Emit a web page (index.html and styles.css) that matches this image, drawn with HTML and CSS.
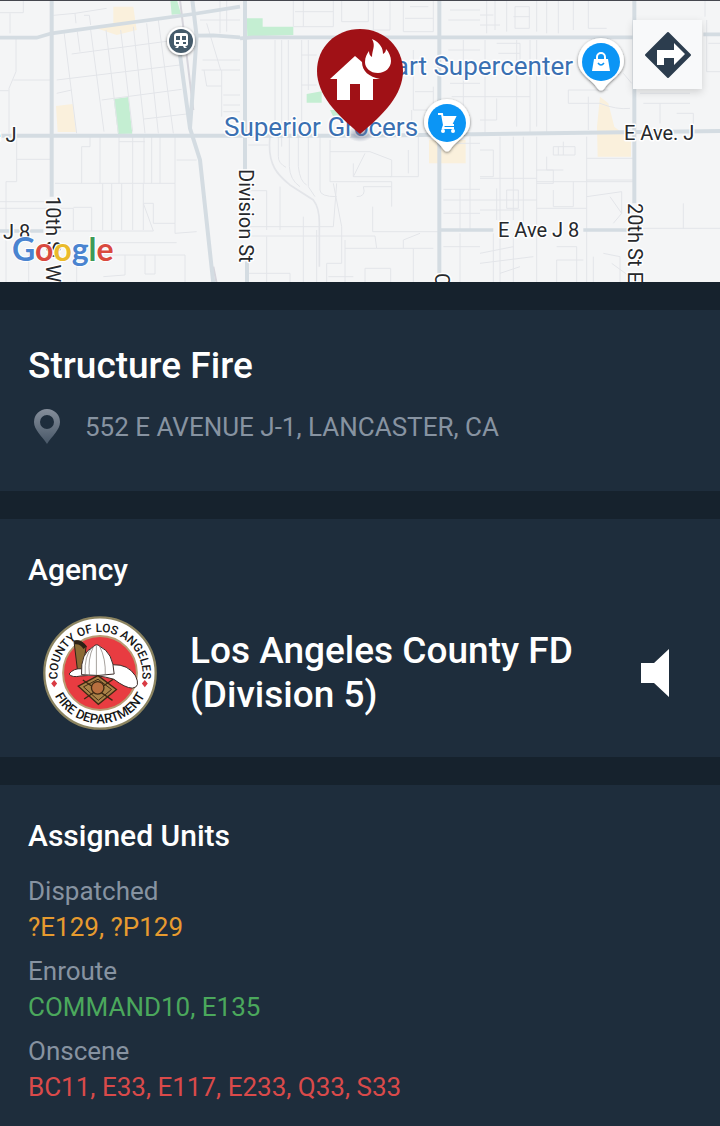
FILE: index.html
```html
<!DOCTYPE html>
<html lang="en">
<head>
<meta charset="utf-8">
<meta name="viewport" content="width=device-width, initial-scale=1">
<title>Structure Fire</title>
<link rel="stylesheet" href="styles.css">
</head>
<body>
<main class="incident">
  <section class="map" aria-label="Incident map">
    <svg class="map-canvas" viewBox="0 0 720 282" preserveAspectRatio="xMidYMid slice" role="img" aria-label="Map of Lancaster">
      <defs>
        <path id="poi" d="M0-24A23 23 0 0 0-23-1C-23 12-9 17-3 27Q0 30 3 27C9 17 23 12 23-1A23 23 0 0 0 0-24Z"/>
        <filter id="shadow" x="-30%" y="-30%" width="160%" height="160%"><feDropShadow dx="0" dy="1" stdDeviation="1.5" flood-color="#000" flood-opacity=".55"/></filter>
        <radialGradient id="tip"><stop offset="0" stop-color="#6b7590" stop-opacity=".7"/><stop offset="1" stop-color="#6b7590" stop-opacity="0"/></radialGradient>
      </defs>
      <g transform="scale(.33333)">
        <g class="zone">
          <path d="M340 20h60l10 70-60 15-60-20 50-15z M168 318l50-6 10 84h-55z M1287 420h110v70h-110z M1800 290l25 20 18 70 50 40v50h-100l-2-90z"/>
        </g>
        <g class="park">
          <path d="M341 297l44-6 12 110-43 1z M511 0h20l12 42-28 2z M740 55h48v25h92v25l-138 4z M920 282l45-8v34h-45z M990 330h60v20h-50z"/>
        </g>
        <g class="street">
          <path d="M0 38H70V0M30 40V100M48 110V215L27 265V400M40 240H150M0 272H26M50 410V545H18V690M50 478H150M0 605H150M0 625H150M18 690V850M86 760V850"/>
          <path d="M160 46L225 40 228 70M225 40L320 25M252 46H268L272 75M215 162L530 120M170 240L540 195M170 280L215 270M305 300L545 268M432 357L560 342"/>
          <path d="M192 95L230 400M232 95L240 155M272 90L312 395M318 90L355 400M362 90L398 395M400 80L435 400M440 70L475 400M475 60L520 400"/>
          <path d="M165 550H525V410M245 550V440H270V410M300 410V550M357 410V550M398 410V550M432 410V550M455 410V550M480 410V550M357 425H435M530 480H590"/>
          <path d="M170 693H460L430 610M220 622H275V693M308 550V690M335 550V690M365 550V690M398 550V690M430 550V690M432 610H460V670H525V550M525 670V700L590 695M170 625H220V690M300 728H530M310 765H555V850M375 765V825L310 830M435 765V822H465V765M230 770V850"/>
          <path d="M600 60H720M608 180H720M605 210H720M612 210L620 258H665V210M665 258V350M620 70L662 210M660 0V100M680 0V95M670 285H720M670 315H720M670 335H720"/>
          <path d="M880 0V80H1000V0M910 0V80M885 35H1000M1025 0V65H1105V0M1120 0V90H1170V0M1210 0V95H1300V0M1215 55H1300M1230 20H1285M1350 30H1440M1345 60H1440"/>
          <path d="M825 120V400M845 120V440M865 120V400M905 120V400M925 120V270M905 165H950M905 255H950M1240 150V330H1300V260M1245 275H1300M1235 330V400M1345 150H1440M1350 250H1440M1355 290H1440M1390 120V400"/>
          <path class="wide" d="M810 410C800 500 840 530 870 555L940 600Q960 625 958 680V800"/>
          <path d="M745 435H805M835 410V470Q835 490 858 502M868 410V500Q870 540 900 560M895 410V500Q900 545 920 555M925 410V560L945 590M960 410V570Q960 590 1010 590M990 420V545H1070M990 455H1110L1175 480V530H1060L1095 460M1060 530V490M1070 545H1175V620M1070 590Q1100 590 1090 560H1175M1170 530H1255V410M1225 450V520"/>
          <path d="M745 572H800V690M720 680H1000L1010 550M745 708H1125L1130 745H1300M1118 620V695H1320M800 710V850M840 560V690M910 650V850M950 690V850M1035 720V850M1035 745H1130M1210 745V720L1260 700M1240 745V850M985 830H1060M1095 850V805H1172V850M1000 550L1025 680V790H980V850M745 820H870V850"/>
          <path d="M1330 430H1440M1330 568H1440M1380 568V690M1330 600H1440M1330 640H1440M1380 700V850M1330 740H1440M1410 410V690"/>
          <path d="M1460 0V100M1485 0V90M1520 0V95M1545 20H1588V85H1545ZM1610 0V95M1640 0V100M1675 0V100M1720 0V90M1765 0V85H1820M1440 45H1480M1440 75H1500M1540 50H1590"/>
          <path d="M1455 120V400M1490 130H1560V200M1495 160H1560M1550 120V380M1590 120V400M1610 120V380M1640 220V400M1440 290H1590M1490 295V360H1440M1705 270H1825M1705 270V310H1800Q1850 330 1890 325M1765 290V390M1870 220L1895 250"/>
          <path d="M1440 450H1480V530H1440M1500 410V850M1540 410V660M1570 410V690M1610 410V850M1440 535H1610M1610 510H1660V550H1610M1640 470V510H1690M1660 440H1725V465H1660ZM1690 425V465M1675 440V465M1760 410V850M1760 475H1900M1760 540H1900M1610 545H1900M1660 570V620H1720V545M1440 600H1610M1490 565V660M1520 570V625H1555V570ZM1610 625H1760M1760 590L1865 575V640L1840 670M1830 590L1865 640M1440 630H1560"/>
          <path d="M1480 700V850M1540 700V850M1440 760L1540 740M1440 790L1600 770M1500 820L1560 800M1670 850V780H1750M1670 740H1730V850M1780 770V850M1810 760L1860 770V850M1835 790L1890 830M1920 280H2070M1980 310V370M1930 310H2070M2030 340H2080V390M2120 60V215H2160M2115 0V50M2125 130H2160M1910 685H2160M2050 610V685"/>
        </g>
        <g class="rail"><path d="M540 0L580 330M640 800L650 850"/></g>
        <g class="road">
          <path d="M0 113H110L155 100 580 42 720 20M590 107L640 106 720 112M720 115L760 112H1900M2110 103H2160" stroke-width="11"/>
          <path d="M155 0V590M0 407H1100L2160 393" stroke-width="12"/>
          <path d="M540 165L570 385 600 480 640 850M577 0L590 110 570 385M735 0V520M741 780V850M1318 0V820M1903 0V610" stroke-width="12"/>
          <path d="M0 693H130M1320 690H1480M1750 690H1900" stroke-width="10"/>
        </g>
      </g>
      <g class="road-label">
        <text x="-10" y="142">e J</text>
        <text x="3" y="239">J 8</text>
        <text x="624" y="140">E Ave. J</text>
        <text x="498" y="237">E Ave J 8</text>
        <text transform="translate(46 196) rotate(90)">10th St W</text>
        <text transform="translate(239 169) rotate(90)">Division St</text>
        <text transform="translate(628 203) rotate(90)">20th St E</text>
        <text transform="translate(435 273) rotate(90)">C</text>
      </g>
      <g class="poi-label">
        <text x="224" y="136">Superior Grocers</text>
        <text x="573" y="75" text-anchor="end">Walmart Supercenter</text>
      </g>
      <g transform="translate(181 41)">
        <circle r="14" fill="#fff" filter="url(#shadow)"/><circle r="12" fill="#455b6b"/>
        <path d="M-4-8H4Q7-8 7-5V3Q7 5 4 5L6 7H3L2 5H-2L-3 7H-6L-4 5Q-7 5-7 3V-5Q-7-8-4-8Z" fill="#fff"/>
        <path d="M-5-5h4v4h-4zM1-5h4v4H1zM-5 1h3v2h-3zM2 1h3v2H2z" fill="#455b6b"/>
      </g>
      <g transform="translate(447 123)">
        <use href="#poi" fill="#fff" filter="url(#shadow)"/><circle r="19" fill="#0b95f5"/>
        <path d="M-9-9H-5L-3 2H7M-4-6H8L5 0H-3M-3 2L-4 5H7" fill="none" stroke="#fff" stroke-width="2"/>
        <path d="M-4-6H8L5 1H-3z" fill="#fff"/><circle cx="-4" cy="8" r="2" fill="#fff"/><circle cx="6" cy="8" r="2" fill="#fff"/>
      </g>
      <g transform="translate(601 62)">
        <use href="#poi" fill="#fff" filter="url(#shadow)"/><circle r="19" fill="#0b95f5"/>
        <path d="M-7-3H7L9 9H-9z" fill="#fff"/><path d="M-4-2V-5A4 4 0 0 1 4-5V-2" fill="none" stroke="#fff" stroke-width="2"/><path d="M-3 1Q0 5 3 1" fill="none" stroke="#0b95f5" stroke-width="1.5"/>
      </g>
      <ellipse cx="360" cy="134" rx="13" ry="8" fill="url(#tip)"/>
      <path d="M360 29C336 29 317 47 317 71C317 95 337 115 360 134C383 115 403 95 403 71C403 47 384 29 360 29Z" fill="#a01116"/>
      <path d="M330 79L355 56 362 62C362 71 369 77 380 79H373V100H360V84H350V100H337V79Z" fill="#fff"/>
      <path d="M372 39C381 43 383 49 383 54C385 53 386 51 386 49C389 52 391 57 391 61C391 68 385 73 378 73C370 73 365 68 365 62C365 57 367 54 369 51C369 54 370 56 372 57C372 50 376 46 372 39Z" fill="#fff"/>
      <text class="brand" x="12" y="261"><tspan class="blue">G</tspan><tspan class="red">o</tspan><tspan class="yellow">o</tspan><tspan class="blue">g</tspan><tspan class="green">l</tspan><tspan class="red">e</tspan></text>
      <path d="M0 0H720" stroke="#45474f" stroke-width="2"/>
    </svg>
    <button class="directions" type="button" aria-label="Directions">
      <svg viewBox="0 0 48 48" aria-hidden="true"><path d="M24 2L46 24 24 46 2 24Z" fill="#2c3d4e" stroke="#2c3d4e" stroke-width="2" stroke-linejoin="round"/><path d="M13 34V19H30V12L41 23 30 34V27H20V34Z" fill="#fff"/></svg>
    </button>
  </section>

  <section class="card summary">
    <h1 class="title">Structure Fire</h1>
    <p class="address">
      <svg class="pin" viewBox="0 0 28 36" aria-hidden="true"><defs><linearGradient id="steel" x1="0" y1="0" x2="0" y2="1"><stop offset="0" stop-color="#858e9b"/><stop offset="1" stop-color="#485767"/></linearGradient></defs><path fill="url(#steel)" fill-rule="evenodd" d="M14 0A13 13 0 0 0 1 13C1 21 9 27 14 35C19 27 27 21 27 13A13 13 0 0 0 14 0ZM14 6A7 7 0 1 1 14 20A7 7 0 1 1 14 6Z"/></svg>
      <span>552 E AVENUE J-1, LANCASTER, CA</span>
    </p>
  </section>

  <section class="card agency">
    <h2 class="heading">Agency</h2>
    <div class="agency-row">
      <svg class="seal" viewBox="37 30 346 346" role="img" aria-label="County of Los Angeles Fire Department seal">
        <defs><path id="arc-top" d="M83 230A129 129 0 1 1 337 230"/><path id="arc-bottom" d="M57 203A153 153 0 0 0 363 203"/></defs>
        <circle cx="210" cy="203" r="169" fill="#fff" stroke="#8c8460" stroke-width="7"/>
        <circle cx="210" cy="203" r="112" fill="#e83c41" stroke="#b99a72" stroke-width="6"/>
        <g class="seal-text">
          <text class="seal-top"><textPath href="#arc-top" startOffset="50%">COUNTY OF LOS ANGELES</textPath></text>
          <text class="seal-bottom"><textPath href="#arc-bottom" startOffset="50%">FIRE DEPARTMENT</textPath></text>
        </g>
        <path d="M71 224l9 11-9 11-9-11zM346 224l9 11-9 11-9-11z" fill="#d93a43"/>
        <path d="M131 106Q152 100 168 122L156 207 143 206Z" fill="#8b6b35" stroke="#2c2116" stroke-width="3"/>
        <path d="M131 106Q152 98 170 122L160 130Q150 114 134 116Z" fill="#2c2116"/>
        <path d="M116 206Q130 188 155 190L250 178Q295 176 318 212Q334 246 308 249Q286 248 252 222Q200 206 152 212Q124 218 116 206Z" fill="#fff" stroke="#3a2a26" stroke-width="3"/>
        <path d="M154 208Q150 142 190 123Q200 112 209 122Q250 140 253 206Q205 214 154 208Z" fill="#fff" stroke="#3a2a26" stroke-width="3"/>
        <path d="M190 123Q172 160 178 210M199 119V210M209 122Q228 160 226 209M186 125Q162 150 165 207" fill="none" stroke="#77706a" stroke-width="2"/>
        <path d="M204 211L260 253 205 298 144 243Z" fill="#a98247" stroke="#3e2913" stroke-width="4"/>
        <path d="M158 224L248 286M250 222L162 282" stroke="#3e2913" stroke-width="4"/>
        <path d="M204 222L245 253 205 286 160 245Z" fill="none" stroke="#3e2913" stroke-width="3"/>
        <circle cx="203" cy="248" r="19" fill="#b96f3f" stroke="#3e2913" stroke-width="4"/>
      </svg>
      <p class="agency-name">Los Angeles County FD (Division 5)</p>
      <button class="speaker" type="button" aria-label="Listen">
        <svg viewBox="0 0 28 48" aria-hidden="true"><path d="M0 14H13L28 0V48L13 34H0Z" fill="#fff"/></svg>
      </button>
    </div>
  </section>

  <section class="card units">
    <h2 class="heading">Assigned Units</h2>
    <dl class="unit-list">
      <div><dt>Dispatched</dt><dd class="dispatched">?E129, ?P129</dd></div>
      <div><dt>Enroute</dt><dd class="enroute">COMMAND10, E135</dd></div>
      <div><dt>Onscene</dt><dd class="onscene">BC11, E33, E117, E233, Q33, S33</dd></div>
    </dl>
  </section>
</main>
</body>
</html>
```

FILE: styles.css
```css
* { box-sizing: border-box; }
body {
  margin: 0;
  background: #16222d;
  color: #fff;
  font-family: Roboto, "Liberation Sans", sans-serif;
}
h1, h2, p, dl, dd { margin: 0; }
button { border: 0; padding: 0; cursor: pointer; }

.incident {
  display: flex;
  flex-direction: column;
  gap: 28px;
  min-height: 100vh;
}

.map { position: relative; background: #f4f5f6; }
.map-canvas { display: block; width: 100%; height: 282px; }
.street { fill: none; stroke: #e3e5e9; stroke-width: 3; }
.street .wide { stroke-width: 5; }
.rail { fill: none; stroke: #d6d5dc; stroke-width: 6; }
.road { fill: none; stroke: #d4dce2; }
.zone { fill: #faf0dc; }
.park { fill: #c4eed2; }
.road-label {
  font-size: 20px;
  fill: #26282b;
  stroke: #fff;
  stroke-width: 3px;
  stroke-linejoin: round;
  paint-order: stroke;
}
.poi-label {
  font-size: 26px;
  fill: #3a70b2;
  stroke: #fff;
  stroke-width: 3px;
  stroke-linejoin: round;
  paint-order: stroke;
}
.brand {
  font-family: Lato, sans-serif;
  font-size: 32px;
  font-weight: 700;
  stroke: #fff;
  stroke-width: 2px;
  paint-order: stroke;
}
.blue { fill: #4a84d0; }
.red { fill: #d9493f; }
.yellow { fill: #eabb2c; }
.green { fill: #3d9a57; }

.directions {
  position: absolute;
  top: 20px;
  right: 18px;
  display: grid;
  place-items: center;
  width: 69px;
  height: 69px;
  background: #f8f9fa;
  box-shadow: 0 3px 8px rgb(0 0 0 / 15%);
}
.directions svg { width: 48px; height: 48px; }

.card { padding: 34px 28px 27px; background: #1e2d3c; }
.summary { padding-bottom: 46px; }
.title { font-size: 37px; line-height: 44px; font-weight: 500; }
.address {
  display: flex;
  align-items: center;
  gap: 24px;
  margin-top: 21px;
  padding-left: 5px;
  color: #8793a1;
  font-size: 26px;
  line-height: 36px;
}
.pin { flex: none; width: 28px; height: 36px; }

.heading { font-size: 30px; line-height: 34px; font-weight: 500; }
.agency-row {
  display: flex;
  align-items: center;
  gap: 33px;
  margin-top: 29px;
  padding: 0 23px 0 15px;
}
.seal { flex: none; width: 114px; height: 114px; }
.seal-text { font-weight: 500; fill: #151515; text-anchor: middle; }
.seal-top { font-size: 36px; }
.seal-bottom { font-size: 39px; }
.agency-name { flex: 1; font-size: 37px; line-height: 44px; font-weight: 500; }
.speaker { flex: none; background: none; }
.speaker svg { display: block; width: 28px; height: 48px; }

.units { flex: 1; padding-bottom: 20px; }
.unit-list {
  display: grid;
  gap: 8px;
  margin-top: 20px;
  font-size: 26px;
  line-height: 36px;
}
.unit-list dt { color: #8793a1; }
.dispatched { color: #e79b2f; }
.enroute { color: #4ba85c; }
.onscene { color: #d94a4a; }
```
